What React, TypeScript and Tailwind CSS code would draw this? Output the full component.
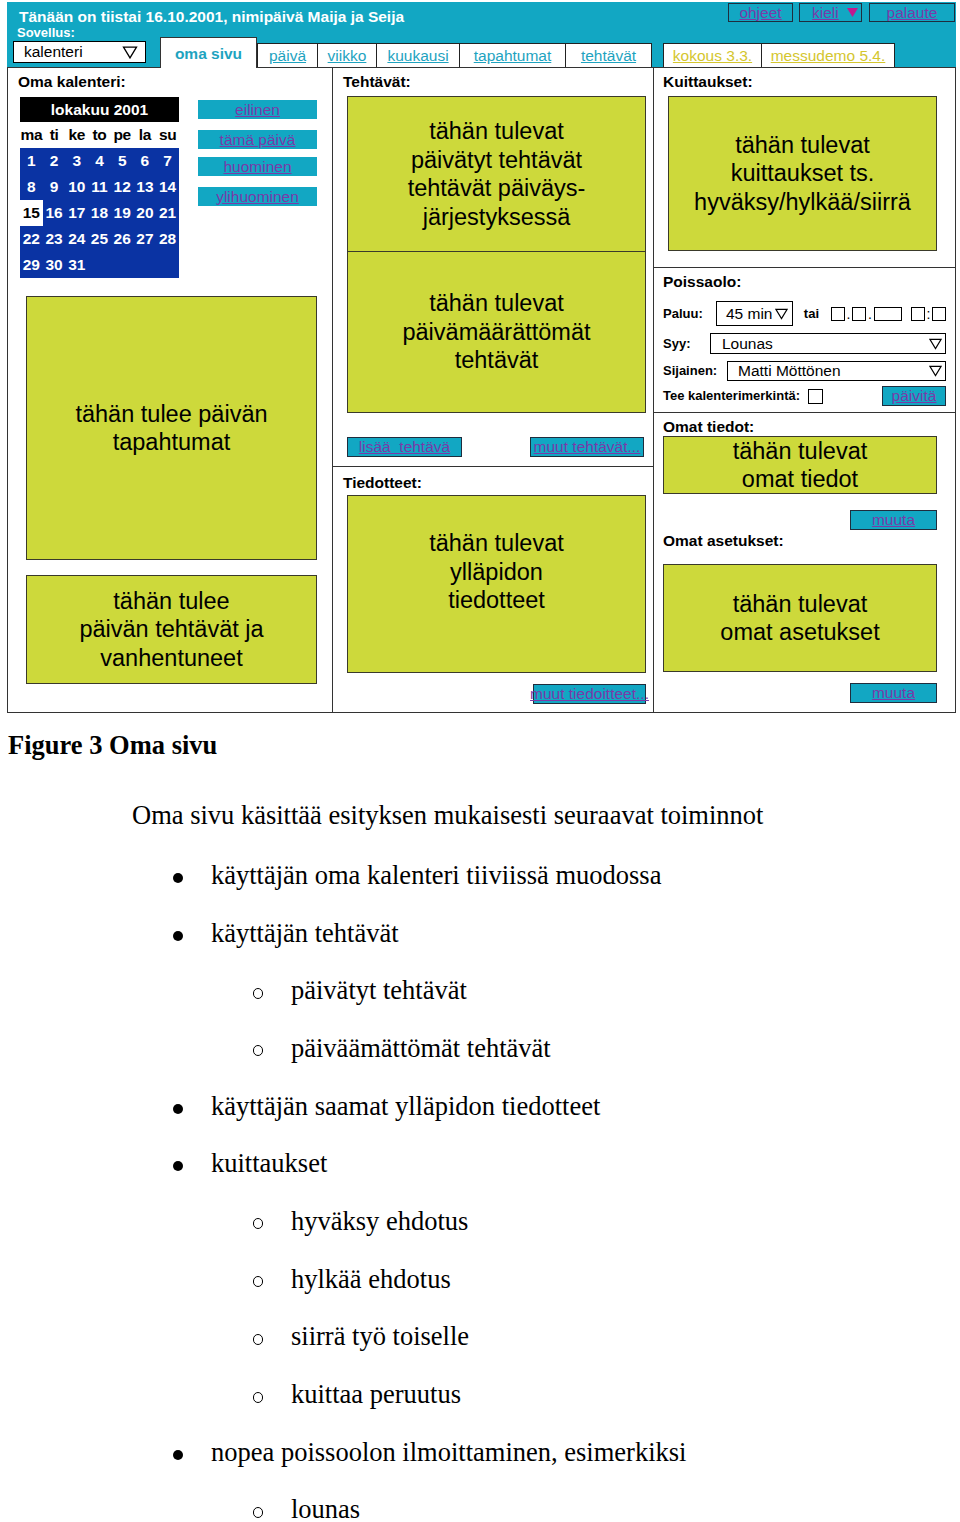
import React from 'react';

const weeks = [
  [1, 2, 3, 4, 5, 6, 7],
  [8, 9, 10, 11, 12, 13, 14],
  [15, 16, 17, 18, 19, 20, 21],
  [22, 23, 24, 25, 26, 27, 28],
  [29, 30, 31],
];

const dayNames = ['ma', 'ti', 'ke', 'to', 'pe', 'la', 'su'];

const listItems = [
  { level: 1, text: 'käyttäjän oma kalenteri tiiviissä muodossa' },
  { level: 1, text: 'käyttäjän tehtävät' },
  { level: 2, text: 'päivätyt tehtävät' },
  { level: 2, text: 'päiväämättömät tehtävät' },
  { level: 1, text: 'käyttäjän saamat ylläpidon tiedotteet' },
  { level: 1, text: 'kuittaukset' },
  { level: 2, text: 'hyväksy ehdotus' },
  { level: 2, text: 'hylkää ehdotus' },
  { level: 2, text: 'siirrä työ toiselle' },
  { level: 2, text: 'kuittaa peruutus' },
  { level: 1, text: 'nopea poissoolon ilmoittaminen, esimerkiksi' },
  { level: 2, text: 'lounas' },
];

const Tri: React.FC<{ w?: number; h?: number }> = ({ w = 14, h = 12 }) => (
  <svg width={w} height={h} viewBox="0 0 14 12" className="shrink-0">
    <polygon points="1,1 13,1 7,11" fill="none" stroke="#000" strokeWidth="1.2" />
  </svg>
);

const Green: React.FC<{ className: string; children: React.ReactNode }> = ({ className, children }) => (
  <div className={'bg-[#cdd93b] border border-[#3a3a2a] flex flex-col items-center text-center text-[23.5px] leading-[28.5px] text-black ' + className}>
    {children}
  </div>
);

const TealButton: React.FC<{ className: string; children: React.ReactNode }> = ({ className, children }) => (
  <div className={'bg-[#12a7c3] border border-[#1f2d3d] h-[20px] flex items-center justify-center whitespace-nowrap text-[15.5px] leading-none text-[#7a3aa8] underline ' + className}>
    {children}
  </div>
);

const Calendar: React.FC = () => (
  <div className="w-[159px] font-bold text-[15.5px] leading-none">
    <div className="h-[25px] bg-black text-white flex items-center justify-center">lokakuu 2001</div>
    <div className="h-[26px] grid grid-cols-7 items-center text-center text-black bg-white tracking-[-0.3px]">
      {dayNames.map((d) => (
        <span key={d}>{d}</span>
      ))}
    </div>
    <div className="bg-[#0a33a3] text-white">
      {weeks.map((w, i) => (
        <div key={i} className="grid grid-cols-7 h-[26px]">
          {w.map((d) => (
            <div
              key={d}
              className={d === 15 ? 'bg-white text-black flex items-center justify-center' : 'flex items-center justify-center'}
            >
              {d}
            </div>
          ))}
        </div>
      ))}
    </div>
  </div>
);

const App: React.FC = () => {
  return (
    <div className="w-[960px] h-[1522px] overflow-hidden bg-white pt-[2px] text-black">
      <div className="ml-[7px] w-[949px] font-['Liberation_Sans',Arial,sans-serif]">
        {/* header band */}
        <div className="bg-[#12a7c3] h-[65px] flex flex-col">
          <div className="h-[35px] flex justify-between">
            <div className="pl-[10px] text-white font-bold">
              <p className="pt-[6px] pl-[2px] text-[15.5px] leading-[18px]">
                Tänään on tiistai 16.10.2001, nimipäivä Maija ja Seija
              </p>
              <p className="text-[13px] leading-[13px]">Sovellus:</p>
            </div>
            <div className="flex pt-[1px] pr-[1px] gap-[6px] h-[20px] box-content">
              <div className="w-[65px] h-[19px] border border-[#1f2d3d] flex items-center justify-center text-[15.5px] text-[#7a3aa8] underline">
                ohjeet
              </div>
              <div className="w-[63px] h-[19px] border border-[#1f2d3d] flex items-center pl-[12px] gap-[8px] text-[15.5px] text-[#7a3aa8]">
                <span className="underline">kieli</span>
                <svg width="11" height="9" viewBox="0 0 11 9">
                  <polygon points="0,0 11,0 5.5,9" fill="#c0198e" />
                </svg>
              </div>
              <div className="w-[86px] h-[19px] border border-[#1f2d3d] flex items-center justify-center text-[15.5px] text-[#7a3aa8] underline ml-[1px]">
                palaute
              </div>
            </div>
          </div>
          <div className="h-[30px] flex items-end text-[15.5px] leading-none">
            <div className="ml-[6px] mb-[4px] w-[133px] h-[22px] border border-black bg-white flex items-center justify-between pl-[10px] pr-[7px]">
              <span>kalenteri</span>
              <Tri w={16} h={13} />
            </div>
            <div className="ml-[14px] w-[97px] h-[31px] -mb-px relative z-10 bg-white border-t border-l border-r border-[#333] flex items-start justify-center pt-[8px] font-bold text-[#1ea3bf]">
              oma sivu
            </div>
            <div className="flex">
              {[
                ['päivä', 'w-[60px]'],
                ['viikko', 'w-[59px]'],
                ['kuukausi', 'w-[83px]'],
                ['tapahtumat', 'w-[106px]'],
                ['tehtävät', 'w-[87px] border-r'],
              ].map(([t, c]) => (
                <div
                  key={t}
                  className={'h-[24px] bg-white border-t border-l border-[#222] flex items-center justify-center text-[#1ea3bf] underline ' + c}
                >
                  {t}
                </div>
              ))}
            </div>
            <div className="ml-[11px] flex">
              <div className="w-[98px] h-[24px] bg-white border-t border-l border-[#222] flex items-center justify-center text-[#d4c62e] underline">
                kokous 3.3.
              </div>
              <div className="w-[134px] h-[24px] bg-white border-t border-l border-r border-[#222] flex items-center justify-center text-[#d4c62e] underline">
                messudemo 5.4.
              </div>
            </div>
          </div>
        </div>

        {/* main panel */}
        <div className="h-[646px] border border-[#333] grid grid-cols-[325px_321px_301px]">
          {/* column 1 */}
          <div className="border-r border-[#333] flex flex-col">
            <p className="pt-[5px] pl-[10px] text-[15.5px] leading-[18px] font-bold">Oma kalenteri:</p>
            <div className="mt-[6px] ml-[12px] flex">
              <Calendar />
              <div className="ml-[19px] w-[119px] flex flex-col text-[15.5px] leading-none text-[#7a3aa8]">
                <div className="mt-[3px] h-[19px] bg-[#12a7c3] flex items-center justify-center underline">eilinen</div>
                <div className="mt-[11px] h-[19px] bg-[#12a7c3] flex items-center justify-center underline">tämä päivä</div>
                <div className="mt-[8px] h-[19px] bg-[#12a7c3] flex items-center justify-center underline">huominen</div>
                <div className="mt-[11px] h-[19px] bg-[#12a7c3] flex items-center justify-center underline">ylihuominen</div>
              </div>
            </div>
            <Green className="mt-[18px] ml-[18px] w-[291px] h-[264px] justify-center">
              <p>
                tähän tulee päivän
                <br />
                tapahtumat
              </p>
            </Green>
            <Green className="mt-[15px] ml-[18px] w-[291px] h-[109px] justify-center">
              <p>
                tähän tulee
                <br />
                päivän tehtävät ja
                <br />
                vanhentuneet
              </p>
            </Green>
          </div>

          {/* column 2 */}
          <div className="border-r border-[#333] flex flex-col">
            <div className="border-b border-[#333] pb-[9px]">
              <p className="pt-[5px] pl-[10px] text-[15.5px] leading-[18px] font-bold">Tehtävät:</p>
              <div className="mt-[5px] ml-[14px] w-[299px] flex flex-col">
                <Green className="h-[156px] justify-center">
                  <p>
                    tähän tulevat
                    <br />
                    päivätyt tehtävät
                    <br />
                    tehtävät päiväys-
                    <br />
                    järjestyksessä
                  </p>
                </Green>
                <Green className="h-[161px] border-t-0 justify-center">
                  <p>
                    tähän tulevat
                    <br />
                    päivämäärättömät
                    <br />
                    tehtävät
                  </p>
                </Green>
              </div>
              <div className="mt-[24px] ml-[14px] w-[297px] flex justify-between">
                <TealButton className="w-[115px]">lisää&nbsp; tehtävä</TealButton>
                <TealButton className="w-[114px]">muut tehtävät...</TealButton>
              </div>
            </div>
            <p className="pt-[7px] pl-[10px] text-[15.5px] leading-[18px] font-bold">Tiedotteet:</p>
            <Green className="mt-[3px] ml-[14px] w-[299px] h-[178px] pt-[33px]">
              <p>
                tähän tulevat
                <br />
                ylläpidon
                <br />
                tiedotteet
              </p>
            </Green>
            <TealButton className="mt-[11px] self-end mr-[7px] w-[113px]">muut tiedoitteet...</TealButton>
          </div>

          {/* column 3 */}
          <div className="flex flex-col">
            <div className="border-b border-[#333] pb-[16px]">
              <p className="pt-[5px] pl-[9px] text-[15.5px] leading-[18px] font-bold">Kuittaukset:</p>
              <Green className="mt-[5px] ml-[14px] w-[269px] h-[155px] justify-center">
                <p>
                  tähän tulevat
                  <br />
                  kuittaukset ts.
                  <br />
                  hyväksy/hylkää/siirrä
                </p>
              </Green>
            </div>

            <div className="border-b border-[#333] pb-[6px] pl-[9px] pr-[9px]">
              <p className="pt-[5px] text-[15.5px] leading-[18px] font-bold">Poissaolo:</p>
              <div className="mt-[10px] h-[25px] flex items-center">
                <span className="w-[53px] text-[13px] font-bold">Paluu:</span>
                <div className="w-[77px] h-[25px] border border-black flex items-center pl-[9px] gap-[3px] text-[15.5px] leading-none">
                  45 min
                  <Tri w={13} h={12} />
                </div>
                <span className="ml-[11px] text-[13px] font-bold">tai</span>
                <div className="ml-[12px] flex items-end text-[14px] leading-none">
                  <span className="w-[14px] h-[14px] border border-black" />
                  <span className="w-[7px] text-center">.</span>
                  <span className="w-[14px] h-[14px] border border-black" />
                  <span className="w-[8px] text-center">.</span>
                  <span className="w-[28px] h-[14px] border border-black" />
                  <span className="w-[14px] h-[14px] border border-black ml-[9px]" />
                  <span className="w-[7px] text-center">:</span>
                  <span className="w-[14px] h-[14px] border border-black" />
                </div>
              </div>
              <div className="mt-[7px] h-[21px] flex items-center">
                <span className="w-[47px] text-[13px] font-bold">Syy:</span>
                <div className="flex-1 h-[21px] border border-black flex items-center justify-between pl-[11px] pr-[3px] text-[15.5px] leading-none">
                  <span>Lounas</span>
                  <Tri w={13} h={12} />
                </div>
              </div>
              <div className="mt-[7px] h-[20px] flex items-center">
                <span className="w-[64px] text-[13px] font-bold">Sijainen:</span>
                <div className="flex-1 h-[20px] border border-black flex items-center justify-between pl-[10px] pr-[3px] text-[15.5px] leading-none">
                  <span>Matti Möttönen</span>
                  <Tri w={13} h={12} />
                </div>
              </div>
              <div className="mt-[5px] h-[20px] flex items-center">
                <span className="text-[13px] font-bold">Tee kalenterimerkintä:</span>
                <span className="ml-[8px] w-[15px] h-[15px] border border-black" />
                <TealButton className="ml-auto w-[64px]">päivitä</TealButton>
              </div>
            </div>

            <div className="flex flex-col pl-[9px]">
              <p className="pt-[5px] text-[15.5px] leading-[18px] font-bold">Omat tiedot:</p>
              <Green className="w-[274px] h-[58px] justify-center">
                <p>
                  tähän tulevat
                  <br />
                  omat tiedot
                </p>
              </Green>
              <TealButton className="mt-[16px] self-end mr-[18px] w-[87px]">muuta</TealButton>
              <p className="mt-[2px] text-[15.5px] leading-[18px] font-bold">Omat asetukset:</p>
              <Green className="mt-[14px] w-[274px] h-[108px] justify-center">
                <p>
                  tähän tulevat
                  <br />
                  omat asetukset
                </p>
              </Green>
              <TealButton className="mt-[11px] self-end mr-[18px] w-[87px]">muuta</TealButton>
            </div>
          </div>
        </div>
      </div>

      {/* document text */}
      <div className="font-['Liberation_Serif','Times_New_Roman',serif] text-[26.5px]">
        <p className="mt-[17px] pl-[8px] font-bold leading-[30px]">Figure 3 Oma sivu</p>
        <p className="mt-[40px] pl-[132px] leading-[30px]">
          Oma sivu käsittää esityksen mukaisesti seuraavat toiminnot
        </p>
        <ul className="mt-[16px]">
          {listItems.map((item, i) => (
            <li
              key={i}
              className={item.level === 1 ? 'h-[57.7px] flex items-center pl-[173px]' : 'h-[57.7px] flex items-center pl-[253px]'}
            >
              <span className="w-[38px] shrink-0 flex">
                {item.level === 1 ? (
                  <span className="mt-[6px] w-[10px] h-[10px] rounded-full bg-black" />
                ) : (
                  <span className="mt-[6px] w-[10px] h-[11px] rounded-full border border-black" />
                )}
              </span>
              <span className="leading-[30px]">{item.text}</span>
            </li>
          ))}
        </ul>
      </div>
    </div>
  );
};

export default App;
